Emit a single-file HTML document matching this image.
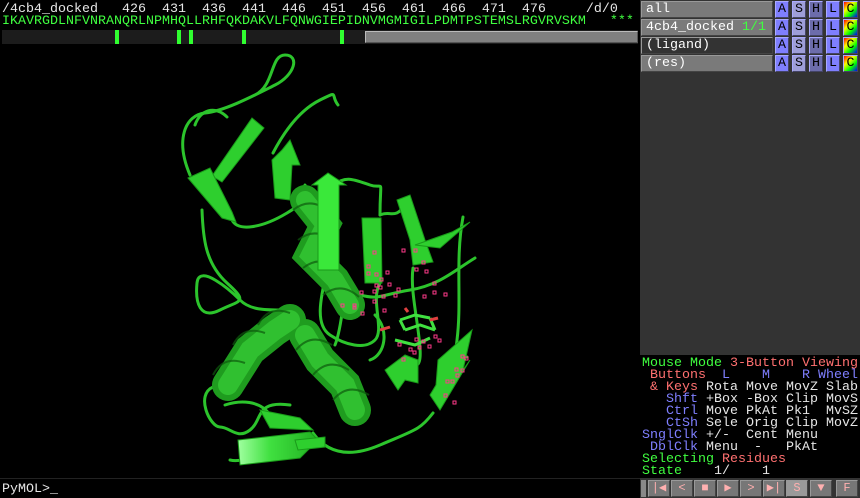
<!DOCTYPE html>
<html><head><meta charset="utf-8"><style>
*{margin:0;padding:0;box-sizing:border-box}
body{width:860px;height:498px;background:#000;position:relative;overflow:hidden;font-family:"Liberation Mono",monospace;font-size:13.33px;line-height:12px;color:#fff}
.t{position:absolute;white-space:pre}
.g{color:#40ff40}.r{color:#ff7070}.b{color:#7f7fff}.w{color:#e6e6e6}
.row{position:absolute;left:641px;width:132px;height:17px;background:#7a7a7a;border:1px solid #999;border-right-color:#444;border-bottom-color:#444;color:#fff;padding-left:4px;line-height:15px}
.bt{position:absolute;width:14px;height:17px;border:1px solid #aaf;border-right-color:#446;border-bottom-color:#446;color:#000;text-align:center;line-height:15px}
.nb{position:absolute;top:480px;width:22px;height:17px;background:#777;border:1px solid #999;border-right-color:#444;border-bottom-color:#444;color:#ffb0b0;text-align:center;line-height:15px;font-size:12px}
</style></head><body>
<div class="t w" style="left:2px;top:4px">/4cb4_docked   426  431  436  441  446  451  456  461  466  471  476     /d/0</div>
<div class="t g" style="left:2px;top:16px">IKAVRGDLNFVNRANQRLNPMHQLLRHFQKDAKVLFQNWGIEPIDNVMGMIGILPDMTPSTEMSLRGVRVSKM   ***</div>
<div style="position:absolute;left:2px;top:30px;width:636px;height:14px;background:#1c1c1c"></div>
<div style="position:absolute;left:115px;top:30px;width:4px;height:14px;background:#30ff30"></div>
<div style="position:absolute;left:177px;top:30px;width:4px;height:14px;background:#30ff30"></div>
<div style="position:absolute;left:189px;top:30px;width:4px;height:14px;background:#30ff30"></div>
<div style="position:absolute;left:242px;top:30px;width:4px;height:14px;background:#30ff30"></div>
<div style="position:absolute;left:340px;top:30px;width:4px;height:14px;background:#30ff30"></div>
<div style="position:absolute;left:365px;top:31px;width:273px;height:12px;background:#808080;border:1px solid #bbb;border-right-color:#555;border-bottom-color:#555"></div>

<svg style="position:absolute;left:0;top:0" width="640" height="478">
<defs>
<linearGradient id="lg" x1="0" x2="1"><stop offset="0" stop-color="#a0ffa0"/><stop offset=".4" stop-color="#40e040"/><stop offset="1" stop-color="#20b020"/></linearGradient>
</defs>
<g fill="none" stroke="#2cc42c" stroke-width="3" stroke-linecap="round">
<path d="M190,175 C175,140 185,115 205,113 S255,95 275,85 S300,55 285,55 S275,85 255,95"/>
<path d="M227,117 C215,105 200,110 195,125"/>
<path d="M232,220 C238,232 262,228 287,213 S300,200 305,185"/>
<path d="M202,210 C203,237 205,263 227,283 S240,300 220,310 S195,303 197,283 S230,290 240,300 S265,310 280,310"/>
<path d="M273,153 C285,130 300,110 320,100 S330,95 338,105"/>
<path d="M335,185 C345,175 355,180 370,185 S380,175 380,215"/>
<path d="M380,215 C390,210 395,220 405,205"/>
<path d="M463,217 C455,260 462,300 457,340 S465,355 467,357"/>
<path d="M475,258 C455,270 440,285 410,290 S380,300 360,295"/>
<path d="M413,268 C410,290 418,320 420,348 S410,360 405,370"/>
<path d="M380,283 C370,300 385,330 375,340 S345,345 330,335 S320,300 327,270"/>
<path d="M343,306 C340,330 337,340 335,345"/>
<path d="M213,387 C195,395 210,427 220,427 S237,440 250,430 S255,400 290,405"/>
<path d="M225,405 C240,400 260,400 270,415"/>
<path d="M313,433 C325,450 345,460 380,445 S420,430 433,413"/>
<path d="M370,360 C385,355 390,330 375,315"/>
<path d="M230,460 C250,465 270,440 310,445"/>
</g>
<g fill="none" stroke-linecap="round">
<path d="M305,200 L325,225 L310,255 L335,280 L350,305" stroke="#1f9c1f" stroke-width="30"/>
<path d="M228,385 L250,350 L275,330 L290,320" stroke="#1f9c1f" stroke-width="32"/>
<path d="M305,335 L320,360 L345,385 L355,410" stroke="#1f9c1f" stroke-width="32"/>
<path d="M305,200 L325,225 L310,255 L335,280 L350,305" stroke="#30c030" stroke-width="18"/>
<path d="M228,385 L250,350 L275,330 L290,320" stroke="#30c030" stroke-width="20"/>
<path d="M305,335 L320,360 L345,385 L355,410" stroke="#30c030" stroke-width="20"/>
</g>
<g fill="none" stroke="#0d5a0d" stroke-width="2" stroke-opacity=".7">
<path d="M293,210 q18,-14 36,2"/><path d="M298,240 q18,-14 36,2"/><path d="M303,268 q18,-14 36,2"/><path d="M323,295 q18,-14 36,2"/>
<path d="M213,375 q10,-20 32,-12"/><path d="M233,345 q10,-20 32,-12"/><path d="M258,325 q10,-20 32,-12"/>
<path d="M296,350 q15,-18 36,-5"/><path d="M313,375 q15,-18 36,-5"/><path d="M333,400 q15,-18 36,-5"/>
</g>
<g fill="#2ecf2e" stroke="#1a9a1a" stroke-width="1">
<polygon points="252,118 264,128 222,182 212,176"/>
<polygon points="188,178 210,168 232,212 236,222 222,218"/>
<polygon points="272,160 282,150 290,140 300,165 292,165 290,200 275,198"/>
<polygon points="318,270 318,185 312,185 328,173 346,185 339,185 339,270" fill="#3ae83a"/>
<polygon points="362,218 381,218 382,283 365,283"/>
<polygon points="397,200 410,195 425,240 433,262 413,265 410,240"/>
<polygon points="415,245 452,232 470,222 440,248"/>
<polygon points="438,360 472,330 463,370 470,360 440,410 430,395 436,385"/>
<polygon points="385,370 405,355 418,360 418,383 405,380 398,390"/>
<polygon points="260,410 300,418 313,430 270,428"/>
<polygon points="238,440 310,432 318,440 300,458 240,465" fill="url(#lg)"/>
<polygon points="295,440 325,437 325,447 298,450"/>
</g>
<g stroke="#40e040" stroke-width="3" fill="none">
<path d="M400,320 L415,315 L430,318 M405,330 L420,325 L435,330 M395,340 L415,345 L430,338 M400,320 L405,330 M430,318 L435,330"/>
</g>
<g stroke="#e04040" stroke-width="3"><path d="M380,330 L390,327"/><path d="M430,320 L438,318"/><path d="M405,308 L408,312"/></g>
<g fill="none" stroke="#ff3a8a" stroke-width="1">
<rect x="373" y="251" width="3" height="3"/><rect x="402" y="249" width="3" height="3"/><rect x="414" y="249" width="3" height="3"/><rect x="422" y="261" width="3" height="3"/><rect x="415" y="268" width="3" height="3"/><rect x="425" y="270" width="3" height="3"/><rect x="367" y="265" width="3" height="3"/><rect x="367" y="272" width="3" height="3"/><rect x="375" y="273" width="3" height="3"/><rect x="386" y="271" width="3" height="3"/><rect x="380" y="278" width="3" height="3"/><rect x="388" y="283" width="3" height="3"/><rect x="375" y="284" width="3" height="3"/><rect x="379" y="286" width="3" height="3"/><rect x="373" y="290" width="3" height="3"/><rect x="397" y="288" width="3" height="3"/><rect x="394" y="294" width="3" height="3"/><rect x="382" y="295" width="3" height="3"/><rect x="360" y="291" width="3" height="3"/><rect x="433" y="282" width="3" height="3"/><rect x="433" y="291" width="3" height="3"/><rect x="444" y="293" width="3" height="3"/><rect x="423" y="295" width="3" height="3"/><rect x="373" y="300" width="3" height="3"/><rect x="341" y="304" width="3" height="3"/><rect x="353" y="304" width="3" height="3"/><rect x="353" y="306" width="3" height="3"/><rect x="361" y="312" width="3" height="3"/><rect x="383" y="309" width="3" height="3"/><rect x="415" y="338" width="3" height="3"/><rect x="422" y="340" width="3" height="3"/><rect x="434" y="335" width="3" height="3"/><rect x="438" y="339" width="3" height="3"/><rect x="398" y="343" width="3" height="3"/><rect x="428" y="345" width="3" height="3"/><rect x="418" y="346" width="3" height="3"/><rect x="409" y="348" width="3" height="3"/><rect x="413" y="351" width="3" height="3"/><rect x="402" y="358" width="3" height="3"/><rect x="461" y="355" width="3" height="3"/><rect x="465" y="357" width="3" height="3"/><rect x="455" y="368" width="3" height="3"/><rect x="461" y="369" width="3" height="3"/><rect x="456" y="374" width="3" height="3"/><rect x="446" y="380" width="3" height="3"/><rect x="451" y="380" width="3" height="3"/><rect x="444" y="394" width="3" height="3"/><rect x="453" y="401" width="3" height="3"/>
</g>
</svg>

<div style="position:absolute;left:640px;top:0;width:220px;height:355px;background:#333"></div>
<div class="row" style="top:1px">all</div>
<div class="row" style="top:19px">4cb4_docked <span class="g">1/1</span></div>
<div class="row" style="top:37px;background:#333">(ligand)</div>
<div class="row" style="top:55px">(res)</div>
<div style="position:absolute;left:0;top:0">
<div class="bt" style="left:775px;top:1px;background:#7f7fff">A</div><div class="bt" style="left:792px;top:1px;background:#9e9ed8">S</div><div class="bt" style="left:809px;top:1px;background:#6c6cab">H</div><div class="bt" style="left:826px;top:1px;background:#7f7fff">L</div><div class="bt" style="left:843px;top:1px;width:15px;background:linear-gradient(135deg,#f00,#ff0,#0f0,#00f)">C</div>
<div class="bt" style="left:775px;top:19px;background:#7f7fff">A</div><div class="bt" style="left:792px;top:19px;background:#9e9ed8">S</div><div class="bt" style="left:809px;top:19px;background:#6c6cab">H</div><div class="bt" style="left:826px;top:19px;background:#7f7fff">L</div><div class="bt" style="left:843px;top:19px;width:15px;background:linear-gradient(135deg,#f00,#ff0,#0f0,#00f)">C</div>
<div class="bt" style="left:775px;top:37px;background:#7f7fff">A</div><div class="bt" style="left:792px;top:37px;background:#9e9ed8">S</div><div class="bt" style="left:809px;top:37px;background:#6c6cab">H</div><div class="bt" style="left:826px;top:37px;background:#7f7fff">L</div><div class="bt" style="left:843px;top:37px;width:15px;background:linear-gradient(135deg,#f00,#ff0,#0f0,#00f)">C</div>
<div class="bt" style="left:775px;top:55px;background:#7f7fff">A</div><div class="bt" style="left:792px;top:55px;background:#9e9ed8">S</div><div class="bt" style="left:809px;top:55px;background:#6c6cab">H</div><div class="bt" style="left:826px;top:55px;background:#7f7fff">L</div><div class="bt" style="left:843px;top:55px;width:15px;background:linear-gradient(135deg,#f00,#ff0,#0f0,#00f)">C</div>
</div>

<div style="position:absolute;left:640px;top:355px;width:220px;height:123px;background:#000"></div>
<div class="t w" style="left:642px;top:358px"><span class="g">Mouse Mode </span><span class="r">3-Button Viewing</span>
<span class="r"> Buttons</span>  <span class="b">L    M    R Wheel</span>
 <span class="r">&amp; Keys</span> Rota Move MovZ Slab
   <span class="b">Shft</span> +Box -Box Clip MovS
   <span class="b">Ctrl</span> Move PkAt Pk1  MvSZ
   <span class="b">CtSh</span> Sele Orig Clip MovZ
<span class="b">SnglClk</span> +/-  Cent Menu
 <span class="b">DblClk</span> Menu  -   PkAt
<span class="g">Selecting </span><span class="r">Residues</span>
<span class="g">State</span>    1/    1</div>

<div style="position:absolute;left:640px;top:478px;width:220px;height:20px;background:#333"></div>
<div style="position:absolute;left:641px;top:480px;width:5px;height:17px;background:#888"></div>
<div class="nb" style="left:648px">|◀</div>
<div class="nb" style="left:671px">&lt;</div>
<div class="nb" style="left:694px">■</div>
<div class="nb" style="left:717px">▶</div>
<div class="nb" style="left:740px">&gt;</div>
<div class="nb" style="left:763px">▶|</div>
<div class="nb" style="left:786px;background:#9a9a9a">S</div>
<div class="nb" style="left:810px">▼</div>
<div class="nb" style="left:836px">F</div>

<div style="position:absolute;left:0;top:478px;width:640px;height:20px;background:#000;border-top:1px solid #222"></div>
<div class="t w" style="left:2px;top:484px">PyMOL&gt;_</div>
</body></html>
